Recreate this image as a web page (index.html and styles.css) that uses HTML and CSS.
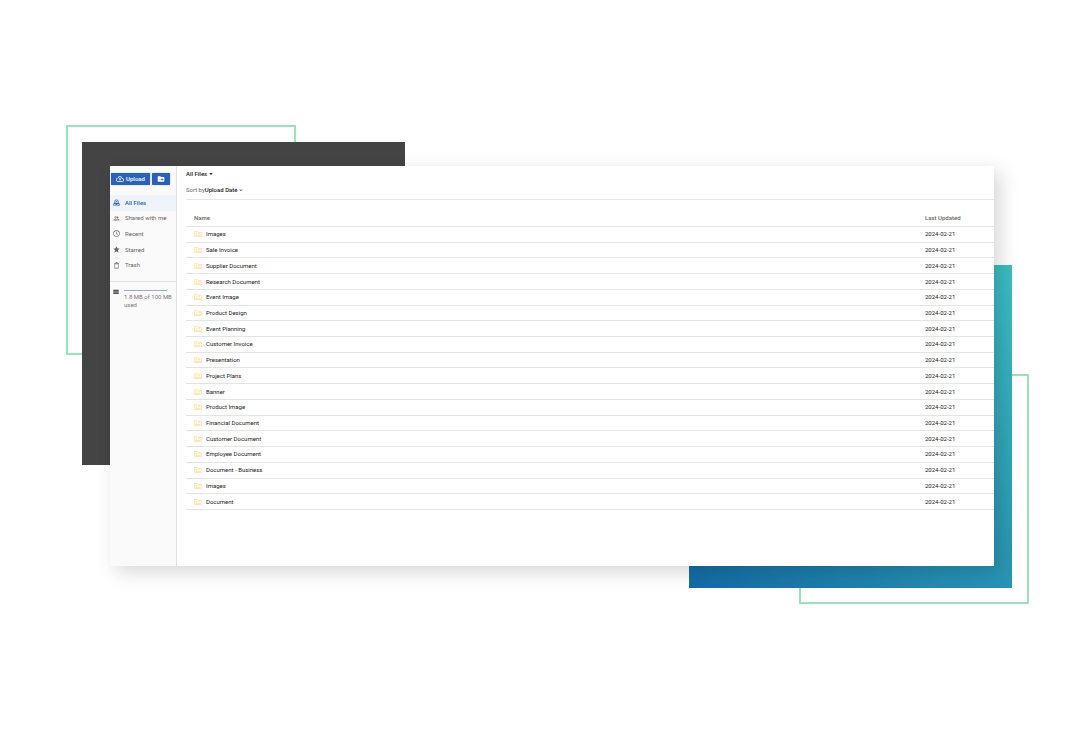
FILE: index.html
```html
<!DOCTYPE html>
<html lang="en">
<head>
    <meta charset="UTF-8">
    <meta name="viewport" content="width=device-width, initial-scale=1.0">
    <title>All Files</title>
    <link rel="stylesheet" href="styles.css">
</head>
<body>
    <main class="stage">
        <div class="outline outline-top"></div>
        <div class="block block-dark"></div>
        <div class="outline outline-bottom"></div>
        <div class="block block-teal"></div>

        <div class="window">
            <aside class="sidebar">
                <div class="actions">
                    <button type="button" class="btn btn-upload">
                        <svg viewBox="0 0 24 24"><path d="M19.35 10.04A7.49 7.49 0 0 0 12 4C9.11 4 6.6 5.64 5.35 8.04A5.994 5.994 0 0 0 0 14c0 3.31 2.69 6 6 6h13c2.76 0 5-2.24 5-5 0-2.64-2.05-4.78-4.65-4.96zM19 18H6c-2.21 0-4-1.79-4-4s1.79-4 4-4h.71C7.37 7.69 9.48 6 12 6c3.04 0 5.5 2.46 5.5 5.5v.5H19c1.66 0 3 1.34 3 3s-1.34 3-3 3zM8 13h2.55v3h2.9v-3H16l-4-4z"/></svg>
                        Upload
                    </button>
                    <button type="button" class="btn btn-folder" aria-label="New folder">
                        <svg viewBox="0 0 24 24"><path d="M20 6h-8l-2-2H4c-1.11 0-2 .89-2 2v12c0 1.11.89 2 2 2h16c1.11 0 2-.89 2-2V8c0-1.11-.89-2-2-2zm-1 8h-3v3h-2v-3h-3v-2h3V9h2v3h3v2z"/></svg>
                    </button>
                </div>

                <nav class="nav">
                    <a href="#" class="nav-item active">
                        <svg viewBox="0 0 24 24"><path d="M5 13V8a7 6 0 0 1 14 0v5l4 3v7H1v-7zm2 0h10V8a5 4 0 0 0-10 0zm-4 5v3h18v-3h-5l-2 2h-4l-2-2zM9 8h6v2H9z"/></svg>
                        All Files
                    </a>
                    <a href="#" class="nav-item">
                        <svg viewBox="0 0 24 24"><path d="M9 13.75c-2.34 0-7 1.17-7 3.5V19h14v-1.75c0-2.33-4.66-3.5-7-3.5zM4.34 17c.84-.58 2.87-1.25 4.66-1.25s3.82.67 4.66 1.25H4.34zM9 12c1.93 0 3.5-1.57 3.5-3.5S10.93 5 9 5 5.5 6.57 5.5 8.5 7.07 12 9 12zm0-5c.83 0 1.5.67 1.5 1.5S9.83 10 9 10s-1.5-.67-1.5-1.5S8.17 7 9 7zm7.04 6.81c1.16.84 1.96 1.96 1.96 3.44V19h4v-1.75c0-2.02-3.5-3.17-5.96-3.44zM15 12c1.93 0 3.5-1.57 3.5-3.5S16.93 5 15 5c-.54 0-1.04.13-1.5.35.63.89 1 1.98 1 3.15s-.37 2.26-1 3.15c.46.22.96.35 1.5.35z"/></svg>
                        Shared with me
                    </a>
                    <a href="#" class="nav-item">
                        <svg viewBox="0 0 24 24"><path d="M12 1a11 11 0 1 0 0 22 11 11 0 0 0 0-22zm0 20a9 9 0 1 1 0-18 9 9 0 0 1 0 18zm1-15h-2v7l5 3 1-2-4-2z"/></svg>
                        Recent
                    </a>
                    <a href="#" class="nav-item">
                        <svg viewBox="0 0 24 24"><path d="M12 18 19 23l-2-9L23 9l-8-1L12 1 9 8 1 9l6 5L5 23z"/></svg>
                        Starred
                    </a>
                    <a href="#" class="nav-item">
                        <svg viewBox="0 0 24 24"><path d="M5 6h14v16H5zm2 2v12h10V8zM4 3h5V1h6v2h5v2H4z"/></svg>
                        Trash
                    </a>
                </nav>

                <div class="storage">
                    <svg viewBox="0 0 24 24"><path d="M1 20h22v-5H1zM1 3v5h22V3zm0 11h22V9H1z"/></svg>
                    <div class="storage-info">
                        <div class="storage-bar"></div>
                        <p>1.8 MB of 100 MB used</p>
                    </div>
                </div>
            </aside>

            <section class="content">
                <div class="toolbar">
                    <button type="button" class="menu-btn">
                        All Files
                        <svg viewBox="0 0 10 6"><path d="M0 0h10L5 6z"/></svg>
                    </button>
                    <div class="sort">
                        <span>Sort by</span>
                        <button type="button" class="menu-btn">
                            Upload Date
                            <svg viewBox="0 0 10 6"><path d="M1 0l4 4 4-4v2L5 6 1 2z"/></svg>
                        </button>
                    </div>
                </div>

                <table class="files">
                    <thead>
                        <tr><th>Name</th><th class="date">Last Updated</th></tr>
                    </thead>
                    <tbody id="file-rows"></tbody>
                </table>
            </section>
        </div>
    </main>

    <script>
        const files = [
            'Images', 'Sale Invoice', 'Supplier Document', 'Research Document',
            'Event Image', 'Product Design', 'Event Planning', 'Customer Invoice',
            'Presentation', 'Project Plans', 'Banner', 'Product Image',
            'Financial Document', 'Customer Document', 'Employee Document',
            'Document - Business', 'Images', 'Document'
        ];
        const folder = '<svg class="folder" viewBox="0 0 24 18"><path d="M1 1h8l3 3h11v13H1zM4 14h16M5 8h5M14 8h5"/></svg>';

        document.getElementById('file-rows').innerHTML = files.map(name =>
            `<tr><td><span class="file">${folder}${name}</span></td><td class="date">2024-02-21</td></tr>`
        ).join('');
    </script>
</body>
</html>
```

FILE: styles.css
```css
* {
    box-sizing: border-box;
}

body {
    margin: 0;
    min-height: 100vh;
    padding: 166px 92px 0 110px;
    background-color: #fff;
    font-family: Roboto, sans-serif;
    font-size: 6px;
    line-height: 8px;
    color: #222;
}

button {
    border: 0;
    padding: 0;
    background: none;
    font: inherit;
    color: inherit;
    cursor: pointer;
}

svg {
    display: block;
    flex: none;
    fill: currentColor;
}

.stage {
    position: relative;
}

/* decorative squares behind the window */
.outline,
.block {
    position: absolute;
}

.outline {
    width: 230px;
    height: 230px;
    border: 2px solid #9be2bb;
}

.block {
    width: 323px;
    height: 323px;
}

.outline-top {
    top: -41px;
    left: -44px;
}

.block-dark {
    top: -24px;
    left: -28px;
    background-color: #444;
}

.outline-bottom {
    right: -35px;
    bottom: -38px;
}

.block-teal {
    right: -18px;
    bottom: -22px;
    background: linear-gradient(45deg, #146aa5, #3cbec2);
}

.window {
    position: relative;
    display: flex;
    min-height: 400px;
    background-color: #fff;
    box-shadow: 6px 6px 18px rgba(0, 0, 0, 0.16);
}

.sidebar {
    flex: none;
    width: 67px;
    border-right: 1px solid #e2e2e2;
    background-color: #fafafa;
    color: #666;
}

.actions {
    display: flex;
    gap: 2px;
    padding: 7px 1px 10px;
}

.btn {
    display: flex;
    align-items: center;
    justify-content: center;
    gap: 2px;
    height: 12px;
    border-radius: 1px;
    background-color: #2c61b8;
    box-shadow: 0 0 1px #2c61b8;
    color: #fff;
    font-weight: 500;
}

.btn svg {
    width: 8px;
    height: 8px;
}

.btn-upload {
    width: 39px;
}

.btn-folder {
    width: 18px;
}

.nav {
    display: flex;
    flex-direction: column;
    height: 87px;
    padding-bottom: 8px;
    border-bottom: 1px solid #e2e2e2;
}

.nav-item {
    display: flex;
    flex: 1;
    align-items: center;
    gap: 5px;
    padding-left: 3px;
    color: #666;
    text-decoration: none;
}

.nav-item svg {
    width: 7px;
    height: 7px;
}

.nav-item.active {
    background-color: #eff4fa;
    color: #2c61b8;
    font-weight: 500;
}

.storage {
    display: flex;
    gap: 5px;
    padding: 7px 3px;
    color: #777;
}

.storage svg {
    width: 6px;
    height: 6px;
    color: #555;
}

.storage-bar {
    width: 43px;
    height: 1px;
    margin: 1px 0 2px;
    background-color: #8eaee0;
}

.storage p {
    margin: 0;
}

.content {
    flex: 1;
    padding-left: 9px;
}

.toolbar {
    display: flex;
    flex-direction: column;
    align-items: flex-start;
    gap: 8px;
    height: 34px;
    padding-top: 4px;
    border-bottom: 1px solid #e6e6e6;
}

.menu-btn {
    display: flex;
    align-items: center;
    gap: 2px;
    font-weight: 500;
}

.menu-btn svg {
    width: 4px;
    height: 2px;
}

.sort {
    display: flex;
    color: #666;
}

.sort .menu-btn {
    gap: 1px;
    color: #222;
}

.files {
    width: 100%;
    height: 300px;
    margin-top: 10px;
    border-collapse: separate;
    border-spacing: 0;
}

.files th,
.files td {
    padding: 0 0 0 8px;
    border-bottom: 1px solid #e4e4e4;
    text-align: left;
    vertical-align: middle;
}

.files thead tr {
    height: 17px;
}

.files th {
    color: #666;
    font-weight: 500;
}

.files .date {
    width: 69px;
    padding-left: 0;
}

.file {
    display: flex;
    align-items: center;
    gap: 4px;
}

.folder {
    width: 8px;
    height: 6px;
    fill: #fffaf0;
    stroke: #f9dc92;
    stroke-width: 2;
}
```
